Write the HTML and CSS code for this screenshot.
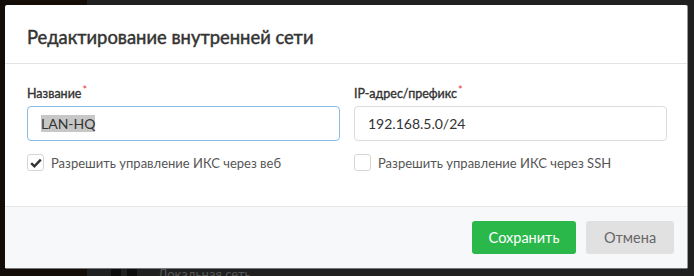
FILE: index.html
```html
<!DOCTYPE html>
<html lang="ru">
<head>
  <meta charset="UTF-8" />
  <title>Редактирование внутренней сети</title>
  <link rel="stylesheet" href="styles.css">
</head>
<body>
  <div class="page">
    <aside class="sidebar"></aside>
    <main class="main">
      <div class="row">
        <span class="blk"></span><span class="blk"></span>
        <span class="row-text">Локальная сеть</span>
      </div>
    </main>
  </div>

  <div class="modal">
    <div class="modal-head">
      <h2>Редактирование внутренней сети</h2>
    </div>
    <div class="modal-body">
      <div class="cols">
        <div class="field">
          <label class="lbl">Название<span class="req">*</span></label>
          <div class="input focused"><span class="sel">LAN-HQ</span></div>
          <label class="check">
            <span class="box checked">
              <svg width="12" height="10" viewBox="0 0 12 10"><path d="M1.2 5.2 L4.4 8.3 L10.8 1.6" fill="none" stroke="#333" stroke-width="2.4"/></svg>
            </span>
            Разрешить управление ИКС через веб
          </label>
        </div>
        <div class="field">
          <label class="lbl">IP-адрес/префикс<span class="req">*</span></label>
          <div class="input">192.168.5.0/24</div>
          <label class="check">
            <span class="box"></span>
            Разрешить управление ИКС через SSH
          </label>
        </div>
      </div>
    </div>
    <div class="modal-foot">
      <button class="btn btn-save">Сохранить</button>
      <button class="btn btn-cancel">Отмена</button>
    </div>
  </div>
</body>
</html>
```

FILE: styles.css
```css
body {
  margin: 0;
  font-family: Lato, "Open Sans", sans-serif;
  background: #1f1f1f;
  width: 694px;
  height: 276px;
  overflow: hidden;
}

.page {
  display: flex;
  height: 276px;
}

.sidebar {
  width: 87px;
  background: #140c07;
}

.main {
  flex: 1;
  background: #202020;
  display: flex;
  flex-direction: column;
  justify-content: flex-end;
}

.row {
  display: flex;
  align-items: center;
  gap: 6px;
  height: 12px;
  padding-left: 24px;
  margin-bottom: -4px;
}

.blk {
  width: 10px;
  height: 10px;
  background: #0c0c0c;
}

.row-text {
  margin-left: 15px;
  font-size: 13px;
  color: #555;
}

.modal {
  position: absolute;
  left: 5px;
  top: 5px;
  width: 682px;
  height: 263px;
  background: #fff;
  border-right: 1px solid #999;
  border-bottom: 1px solid #777;
  border-radius: 2px;
  display: flex;
  flex-direction: column;
}

.modal-head {
  height: 58px;
  border-bottom: 1px solid #e3e3e3;
  padding: 0 22px;
  display: flex;
  align-items: center;
}

.modal-head h2 {
  margin: 0;
  font-size: 18.4px;
  font-weight: normal;
  -webkit-text-stroke: 0.45px #333;
  color: #333;
  padding-top: 5px;
}

.modal-body {
  flex: 1;
  padding: 22px 20px 0 22px;
  border-bottom: 1px solid #e6e6e6;
}

.cols {
  display: grid;
  grid-template-columns: 313px 313px;
  column-gap: 14px;
}

.field {
  display: flex;
  flex-direction: column;
}

.lbl {
  font-size: 12.5px;
  font-weight: normal;
  -webkit-text-stroke: 0.35px #333;
  color: #333;
  height: 17px;
  margin-bottom: 3px;
}

.req {
  color: #e53935;
  -webkit-text-stroke: 0;
  font-size: 11px;
  vertical-align: top;
  margin-left: 1px;
  position: relative;
  top: -3px;
}

.input {
  height: 33px;
  border: 1px solid #dcdcdc;
  border-radius: 4px;
  padding: 0 13px;
  font-size: 14px;
  color: #333;
  display: flex;
  align-items: center;
}

.input.focused {
  border-color: #86bde3;
}

.sel {
  background: #c7c7c7;
  line-height: 17px;
}

.check {
  display: flex;
  align-items: center;
  gap: 7px;
  margin-top: 13px;
  font-size: 13px;
  color: #555;
}

.box {
  width: 15px;
  height: 15px;
  border: 1px solid #d6d6d6;
  border-radius: 3px;
  display: flex;
  align-items: center;
  justify-content: center;
}

.modal-foot {
  height: 61px;
  background: #f7f8fa;
  display: flex;
  align-items: center;
  justify-content: flex-end;
  gap: 10px;
  padding-right: 13px;
}

.btn {
  height: 33px;
  border: none;
  border-radius: 3px;
  font-family: Lato, "Open Sans", sans-serif;
  font-size: 14.5px;
  cursor: pointer;
}

.btn-save {
  width: 104px;
  background: #2bb84b;
  color: #fff;
}

.btn-cancel {
  width: 88px;
  background: #e1e1e1;
  color: #666;
}
```
